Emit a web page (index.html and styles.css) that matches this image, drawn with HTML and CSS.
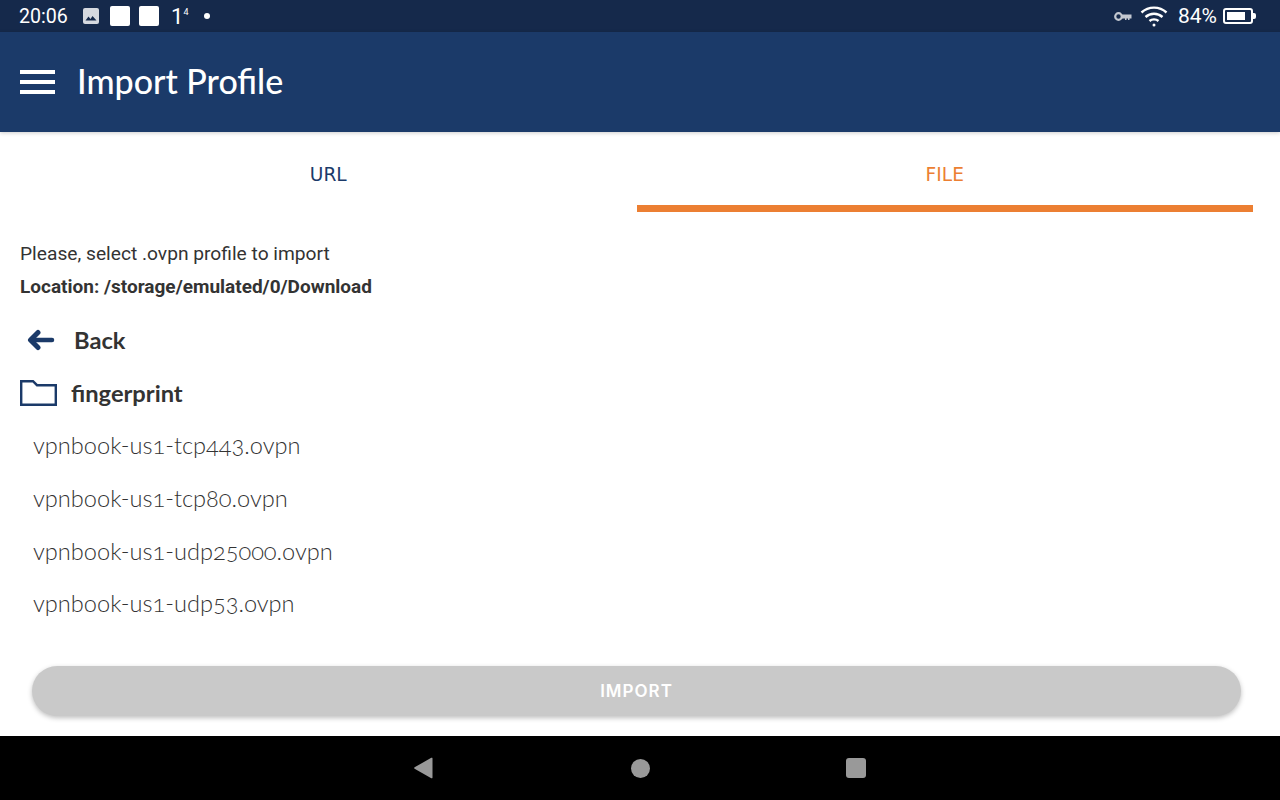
FILE: index.html
```html
<!DOCTYPE html>
<html>
<head>
    <meta charset="utf-8">
    <title>Import Profile</title>
    <link rel="stylesheet" href="styles.css">
</head>
<body>
    <div class="screen">
        <div class="status">
            <span class="clock">20:06</span>
            <svg class="ic-image" width="18" height="18" viewBox="0 0 18 18"><rect x="1" y="1" width="16" height="16" rx="2" fill="#d5d9e0"/><path d="M3.500 13.500l3-4 2 2.500 2-3 4 4.500z" fill="#15294b"/></svg>
            <span class="white-box"></span>
            <span class="white-box"></span>
            <span class="one">1<sup>4</sup></span>
            <span class="dot"></span>
            <span class="spacer"></span>
            <svg class="ic-key" width="18" height="11" viewBox="0 0 18 11"><circle cx="4.500" cy="5.500" r="3.300" fill="none" stroke="#c3c8d1" stroke-width="2.200"/><path d="M8 3.500h9.500v4h-2v1.500h-1.500v-1.500h-1.500v1.500h-1.500v-1.500h-3z" fill="#c3c8d1"/></svg>
            <svg class="ic-wifi" width="28" height="22" viewBox="0 0 28 22" fill="none" stroke="#fff" stroke-width="2.400"><path d="M1.500 7.500c7-6.500 18-6.500 25 0"/><path d="M5.500 12c4.800-4.300 12.200-4.300 17 0"/><path d="M9.500 16c2.500-2.200 6.500-2.200 9 0"/><circle cx="14" cy="20" r="1.500" fill="#fff" stroke="none"/></svg>
            <span class="batt-text">84%</span>
            <span class="battery"><span class="battery-fill"></span></span>
        </div>
        <div class="appbar">
            <div class="burger"><span></span><span></span><span></span></div>
            <h1>Import Profile</h1>
        </div>
        <div class="tabs">
            <div class="tab">URL</div>
            <div class="tab active">FILE</div>
        </div>
        <div class="content">
            <p class="hint">Please, select .ovpn profile to import</p>
            <p class="location">Location: /storage/emulated/0/Download</p>
            <ul class="files">
                <li class="row back">
                    <svg width="28" height="22" viewBox="0 0 28 22" fill="none" stroke="#1b3a69" stroke-linecap="round" stroke-linejoin="round"><path d="M11 3.500l-7.500 7.500 7.500 7.500" stroke-width="5"/><path d="M6 11h19" stroke-width="4.500"/></svg>
                    <span>Back</span>
                </li>
                <li class="row folder">
                    <svg width="37" height="26" viewBox="0 0 37 26" fill="none" stroke="#1b3a69" stroke-width="2.400"><path d="M1.200 1.200h11.800l4 4h18.800v19.600h-34.600z"/></svg>
                    <span>fingerprint</span>
                </li>
                <li class="row file">vpnbook-us1-tcp443.ovpn</li>
                <li class="row file">vpnbook-us1-tcp80.ovpn</li>
                <li class="row file">vpnbook-us1-udp25000.ovpn</li>
                <li class="row file">vpnbook-us1-udp53.ovpn</li>
            </ul>
        </div>
        <div class="actions"><button class="import">IMPORT</button></div>
        <div class="navbar">
            <svg class="nav-back" width="19" height="22" viewBox="0 0 19 22"><path d="M18.500 1.500v19a.8.8 0 0 1-1.200.7L.6 11.700a.8.8 0 0 1 0-1.400L17.300.8a.8.8 0 0 1 1.200.7z" fill="#999"/></svg>
            <span class="nav-circle"></span>
            <span class="nav-square"></span>
        </div>
    </div>
</body>
</html>
```

FILE: styles.css
```css
* { box-sizing: border-box; }
html, body { margin: 0; padding: 0; }
body { width: 1280px; height: 800px; overflow: hidden; background: #fff; font-family: Roboto, sans-serif; color: #333; }
.screen { display: flex; flex-direction: column; height: 800px; }

.status { height: 32px; background: #15294b; color: #fff; display: flex; align-items: center; padding: 0 27px 0 19px; font-size: 19.600px; }
.clock { width: 63px; }
.ic-image { margin-right: 10px; }
.white-box { width: 20px; height: 20px; background: #fff; border-radius: 2px; margin-right: 9px; }
.one { width: 33px; margin-left: 3px; font-size: 22px; }
.one sup { font-size: 9px; vertical-align: 9px; line-height: 0; }
.dot { width: 6px; height: 6px; border-radius: 50%; background: #fff; }
.spacer { flex: 1; }
.ic-key { margin-right: 8px; }
.ic-wifi { margin-right: 10px; }
.batt-text { margin-right: 6px; font-size: 21px; }
.battery { width: 30px; height: 16px; border: 2px solid #fff; border-radius: 3px; padding: 2px; position: relative; }
.battery::after { content: ""; position: absolute; right: -5px; top: 3px; width: 3px; height: 6px; background: #fff; border-radius: 0 2px 2px 0; }
.battery-fill { display: block; width: 84%; height: 100%; background: #fff; }

.appbar { height: 100px; background: #1b3a69; color: #fff; display: flex; align-items: center; padding-left: 20px; box-shadow: 0 1px 4px rgba(0,0,0,.2); }
.burger { width: 35px; margin-right: 22px; display: flex; flex-direction: column; gap: 6px; }
.burger span { height: 4px; background: #fff; }
.appbar h1 { margin: 0 0 4px; font-family: Lato, sans-serif; font-size: 34px; font-weight: 500; }

.tabs { display: flex; height: 80px; padding: 0 27px 0 20px; }
.tab { flex: 1; text-align: center; font-family: "DejaVu Sans", sans-serif; font-size: 18.600px; line-height: 85px; color: #1b3a69; }
.tab.active { color: #ec7f32; border-bottom: 7px solid #ec7f32; }

.content { flex: 1; padding: 26px 20px 0; }
.hint, .location { margin: 0; font-size: 19.200px; line-height: 32px; }
.location { margin-top: 1px; font-size: 19px; font-weight: 700; }
.files { list-style: none; margin: 10.500px 0 0; padding: 0; }
.row { height: 52.700px; display: flex; align-items: center; font-family: Lato, sans-serif; font-size: 23.600px; font-variant-numeric: oldstyle-nums; }
.back svg { margin-right: 19px; margin-left: 7px; }
.back span, .folder span { font-size: 23.700px; font-weight: 700; }
.folder svg { margin-right: 14px; }
.file { padding-left: 13px; font-weight: 300; }

.actions { height: 70px; padding: 0 39px 0 32px; }
.import { width: 100%; height: 50px; border: 0; border-radius: 25px; background: #c9c9c9; color: #fff; font-family: Inter, sans-serif; font-size: 17px; font-weight: 600; letter-spacing: 1px; box-shadow: 0 2px 5px rgba(0,0,0,.25); }

.navbar { height: 64px; background: #000; display: flex; align-items: center; justify-content: center; gap: 196px; }
.nav-back { margin-right: 2px; }
.nav-circle { width: 19px; height: 19px; border-radius: 50%; background: #999; }
.nav-square { width: 20px; height: 20px; border-radius: 3px; background: #999; }
```
